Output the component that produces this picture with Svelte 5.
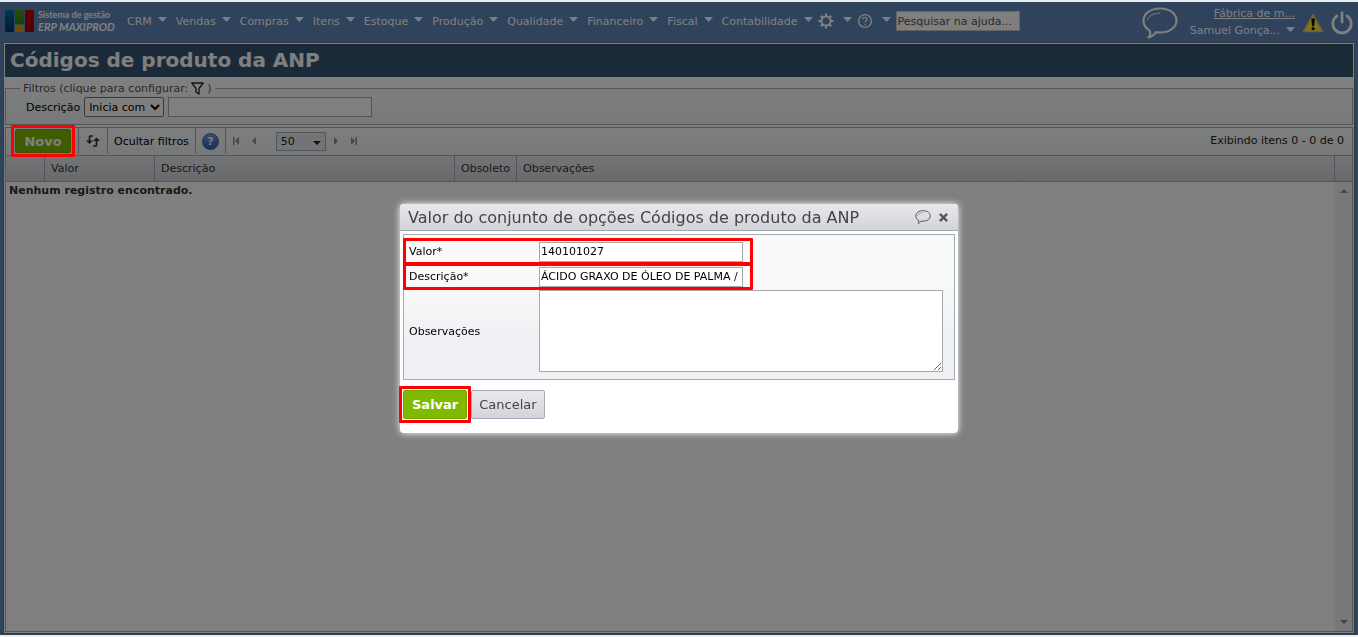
<script>
  const menus = ["CRM", "Vendas", "Compras", "Itens", "Estoque", "Produção", "Qualidade", "Financeiro", "Fiscal", "Contabilidade"];

  let filterMode = $state("Inicia com");
  let filterText = $state("");
  let pageSize = $state("50");
  let showFilters = $state(true);
  let dialogOpen = $state(true);
  let item = $state({
    valor: "140101027",
    descricao: "ÁCIDO GRAXO DE ÓLEO DE PALMA /",
    observacoes: "",
  });

  function closeDialog() {
    dialogOpen = false;
  }
</script>

{#snippet caret()}
  <svg class="caret" width="9" height="5" viewBox="0 0 9 5" aria-hidden="true"><path d="M0 0h9L4.5 5z" fill="currentColor" /></svg>
{/snippet}

{#snippet bubble(w, h)}
  <svg width={w} height={h} viewBox="0 0 36 32" fill="none" stroke="currentColor" stroke-linecap="round" stroke-linejoin="round" aria-hidden="true">
    <path d="M7.5 23.5C3.5 21 1.5 17.5 1.5 13.5C1.5 6.500 8.500 1.500 18 1.500S34.500 6.500 34.500 13.500S27.500 25.500 18 25.500C16.500 25.500 15.500 25.500 14 25.200C12 28 9.500 30 6.500 30.300C8.500 28 8.800 26 7.500 23.500z" stroke-width="2.2" />
    <path d="M5.5 13C6 9 11 6.200 18 6" stroke-width="1" />
  </svg>
{/snippet}

<div class="app">
  <header class="topbar">
    <a class="logo" href="#inicio">
      <svg width="30" height="23" viewBox="0 0 30 23" aria-hidden="true">
        <defs>
          <linearGradient id="lg-blue" x2="0" y2="1"><stop stop-color="#006cb4" /><stop offset="1" stop-color="#003a66" /></linearGradient>
          <linearGradient id="lg-green" x2="0" y2="1"><stop stop-color="#3fa012" /><stop offset="1" stop-color="#3a8404" /></linearGradient>
          <linearGradient id="lg-red" x2="0" y2="1"><stop stop-color="#d00000" /><stop offset="1" stop-color="#980000" /></linearGradient>
        </defs>
        <rect x="0" y="0" width="9" height="22" rx="1" fill="url(#lg-blue)" />
        <rect x="10" y="0" width="9" height="14" rx="1" fill="url(#lg-green)" />
        <rect x="10" y="15" width="9" height="7" rx="1" fill="#d29a10" />
        <rect x="20" y="0" width="9" height="22" rx="1" fill="url(#lg-red)" />
      </svg>
      <span class="logo-text"><span>Sistema de gestão</span><em>ERP MAXIPROD</em></span>
    </a>

    <nav class="menu">
      {#each menus as name}
        <button class="menu-item">{name}{@render caret()}</button>
      {/each}
      <button class="menu-item icon" aria-label="Configurações">
        <svg width="16" height="16" viewBox="0 0 16 16" fill="none" stroke="currentColor" aria-hidden="true">
          <circle cx="8" cy="8" r="4.6" stroke-width="2" />
          <path d="M8 .5v2.500M8 13v2.500M.5 8H3M13 8h2.500M2.700 2.700l1.800 1.800M11.500 11.500l1.800 1.800M2.700 13.300l1.800-1.800M11.500 4.500l1.800-1.800" stroke-width="2.2" />
        </svg>
        {@render caret()}
      </button>
      <button class="menu-item icon" aria-label="Ajuda">
        <svg width="16" height="16" viewBox="0 0 16 16" fill="none" stroke="currentColor" aria-hidden="true">
          <circle cx="8" cy="8" r="6.4" stroke-width="1.4" />
          <path d="M6 6.300C6 3.700 10.200 3.900 10.100 6.200C10 7.600 8.100 7.700 8.100 9.500M8.100 10.800v1.400" stroke-width="1.3" />
        </svg>
        {@render caret()}
      </button>
    </nav>
    <input class="help-search" type="text" placeholder="Pesquisar na ajuda..." aria-label="Pesquisar na ajuda" />

    <div class="user">
      <button class="plain" aria-label="Chat">{@render bubble(36, 32)}</button>
      <div class="account">
        <a href="#empresa">Fábrica de m...</a>
        <button class="plain name">Samuel Gonça...{@render caret()}</button>
      </div>
      <button class="plain" aria-label="Avisos">
        <svg width="22" height="20" viewBox="0 0 22 20" aria-hidden="true">
          <path d="M11 1.500L20.500 18.500H1.500z" fill="#ffe92e" stroke="#dcb888" stroke-width="1.5" stroke-linejoin="round" />
          <path d="M9.300 5.500h3.600l-.8 7.500h-2z" fill="#000" />
          <circle cx="11.1" cy="15.600" r="1.6" fill="#000" />
        </svg>
      </button>
      <button class="plain" aria-label="Sair">
        <svg width="22" height="24" viewBox="0 0 22 24" fill="none" stroke="currentColor" stroke-width="2.8" stroke-linecap="round" aria-hidden="true">
          <path d="M6 5A9.200 9.200 0 1 0 16 5M11 2v9" />
        </svg>
      </button>
    </div>
  </header>

  <main class="page">
    <h1>Códigos de produto da ANP</h1>

    {#if showFilters}
      <fieldset class="filters">
        <legend>
          Filtros (clique para configurar:
          <svg width="13" height="13" viewBox="0 0 13 13" fill="none" stroke="#222" stroke-width="1.3" stroke-linejoin="round" aria-hidden="true">
            <path d="M.8 1h11.400L8 6.500V12L5 10V6.500z" />
          </svg>
          )
        </legend>
        <div class="filter-row">
          <label for="filtro">Descrição</label>
          <select bind:value={filterMode} aria-label="Tipo de filtro">
            <option>Inicia com</option>
            <option>Contém</option>
            <option>Igual a</option>
          </select>
          <input id="filtro" type="text" bind:value={filterText} />
        </div>
      </fieldset>
    {/if}

    <section class="grid">
      <div class="toolbar">
        <div class="cell first">
          <div class="marked">
            <button class="primary new" onclick={() => (dialogOpen = true)}>Novo</button>
          </div>
        </div>
        <div class="cell wide">
          <button class="plain dark" aria-label="Atualizar">
            <svg width="14" height="12" viewBox="0 0 14 12" aria-hidden="true">
              <path d="M7 1H4.500Q3.500 1 3.500 2V7M7 11h2.500Q10.500 11 10.500 10V5" fill="none" stroke="#333" stroke-width="1.7" />
              <path d="M0 5.500h7L3.500 9zM7 6h7L10.500 2.500z" fill="#333" />
            </svg>
          </button>
        </div>
        <div class="cell">
          <button class="plain dark" onclick={() => (showFilters = !showFilters)}>Ocultar filtros</button>
        </div>
        <div class="cell">
          <button class="help" aria-label="Ajuda da tela">?</button>
        </div>
        <div class="pager">
          <button class="plain" aria-label="Primeira página"><svg width="8" height="8" viewBox="0 0 8 8"><path d="M1 0h1.500v8H1zM7 0v8L3 4z" fill="currentColor" /></svg></button>
          <button class="plain" aria-label="Página anterior"><svg width="8" height="8" viewBox="0 0 8 8"><path d="M6 0v8L2 4z" fill="currentColor" /></svg></button>
          <div class="size">
            <select bind:value={pageSize} aria-label="Itens por página">
              <option>20</option>
              <option>50</option>
              <option>100</option>
            </select>
            <svg width="8" height="4" viewBox="0 0 8 4" aria-hidden="true"><path d="M0 0h8L4 4z" fill="#222" /></svg>
          </div>
          <button class="plain" aria-label="Próxima página"><svg width="8" height="8" viewBox="0 0 8 8"><path d="M2 0v8l4-4z" fill="currentColor" /></svg></button>
          <button class="plain" aria-label="Última página"><svg width="8" height="8" viewBox="0 0 8 8"><path d="M5.500 0h1.500v8H5.500zM1 0v8l4-4z" fill="currentColor" /></svg></button>
        </div>
        <span class="count">Exibindo itens 0 - 0 de 0</span>
      </div>

      <div class="records">
        <table>
          <colgroup>
            <col class="c-sel" /><col class="c-valor" /><col class="c-desc" /><col class="c-obs" /><col /><col class="c-bar" />
          </colgroup>
          <thead>
            <tr><th></th><th>Valor</th><th>Descrição</th><th>Obsoleto</th><th>Observações</th><th></th></tr>
          </thead>
          <tbody>
            <tr><td colspan="5">Nenhum registro encontrado.</td></tr>
          </tbody>
        </table>
        <div class="scrollbar">
          <svg width="8" height="4" viewBox="0 0 8 4"><path d="M0 4h8L4 0z" fill="currentColor" /></svg>
          <svg width="8" height="4" viewBox="0 0 8 4"><path d="M0 0h8L4 4z" fill="currentColor" /></svg>
        </div>
      </div>
    </section>
  </main>
</div>

{#if dialogOpen}
  <div class="overlay">
    <div class="dialog" role="dialog" aria-modal="true" aria-labelledby="dialog-title">
      <div class="dialog-head">
        <h2 id="dialog-title">Valor do conjunto de opções Códigos de produto da ANP</h2>
        <button class="plain" aria-label="Comentar">{@render bubble(16, 14)}</button>
        <button class="plain" aria-label="Fechar" onclick={closeDialog}>
          <svg width="9" height="9" viewBox="0 0 10 10" stroke="currentColor" stroke-width="2.6" aria-hidden="true"><path d="M1 1l8 8M9 1L1 9" /></svg>
        </button>
      </div>
      <form id="item-form" class="fields" onsubmit={(e) => { e.preventDefault(); closeDialog(); }}>
        <div class="field boxed">
          <label for="valor">Valor*</label>
          <input id="valor" type="text" bind:value={item.valor} />
        </div>
        <div class="field boxed">
          <label for="descricao">Descrição*</label>
          <input id="descricao" type="text" bind:value={item.descricao} />
        </div>
        <div class="field notes">
          <label for="observacoes">Observações</label>
          <textarea id="observacoes" bind:value={item.observacoes}></textarea>
        </div>
      </form>
      <div class="actions">
        <div class="marked save">
          <button class="primary" type="submit" form="item-form">Salvar</button>
        </div>
        <button class="secondary" onclick={closeDialog}>Cancelar</button>
      </div>
    </div>
  </div>
{/if}

<style>
  :global(body) {
    background: #e8eef4;
    font-family: Verdana, "DejaVu Sans", sans-serif;
    font-size: 11px;
    color: #000;
  }
  * { box-sizing: border-box; }
  button, input, select, textarea { font: inherit; }
  button { cursor: pointer; }
  svg { display: block; flex: none; }

  .app {
    display: flex;
    flex-direction: column;
    min-height: 100vh;
    padding: 0 3px 1px;
    border-top: 2px solid #e8eef4;
    border-bottom: 2px solid #e8eef4;
    background: #5e86b8;
  }

  .topbar {
    display: flex;
    align-items: center;
    height: 40px;
    padding: 0 2px 2px;
    color: #fff;
  }
  .logo {
    display: flex;
    gap: 3px;
    width: 122px;
    color: #fff;
    text-decoration: none;
  }
  .logo-text {
    display: flex;
    flex-direction: column;
    font: bold 9px/10px Lato, sans-serif;
    white-space: nowrap;
  }
  .logo-text em { font-size: 11px; line-height: 13px; }
  .menu { display: flex; align-items: center; gap: 9px; }
  .menu-item {
    display: flex;
    align-items: center;
    gap: 6px;
    padding: 0;
    border: 0;
    background: none;
    color: inherit;
    white-space: nowrap;
  }
  .caret { margin-bottom: 4px; }
  .menu-item.icon { gap: 9px; margin-left: -4px; }
  .menu-item.icon:first-of-type { margin-left: 0; }
  .help-search {
    width: 124px;
    height: 20px;
    margin-left: 5px;
    padding: 0 1px;
    border: 1px solid #c8c8c8;
    background: #fff;
  }
  .help-search::placeholder { color: #555; opacity: 1; }
  .user {
    display: flex;
    align-items: center;
    gap: 7px;
    margin-left: auto;
    padding-top: 3px;
  }
  .account {
    display: flex;
    flex-direction: column;
    align-items: flex-end;
    gap: 3px;
    margin-left: 5px;
    line-height: 14px;
  }
  .account a { color: inherit; }
  .account .name { gap: 6px; }
  .plain {
    display: flex;
    align-items: center;
    padding: 0;
    border: 0;
    background: none;
    color: inherit;
    white-space: nowrap;
  }
  .plain.dark { color: #000; }

  .page {
    display: flex;
    flex-direction: column;
    flex: 1;
    padding: 1px;
    border: 1px solid #6c7480;
    background: #fff;
  }
  h1 {
    margin: 0;
    padding: 0 5px;
    background: #365472;
    color: #fff;
    font-size: 20px;
    line-height: 33px;
  }

  .filters {
    height: 43px;
    margin: 5px 0 2px;
    padding: 0 20px;
    border: 1px solid #a5abb5;
    background: linear-gradient(#fafcfb, #eff1f4);
  }
  .filters legend {
    display: flex;
    align-items: center;
    gap: 3px;
    height: 12px;
    margin-left: -6px;
    padding: 0 3px;
    color: #555;
  }
  .filter-row { display: flex; align-items: center; gap: 4px; margin-top: 3px; }
  .filter-row select {
    width: 80px;
    height: 20px;
    padding: 0;
    border: 1px solid #767676;
    border-radius: 2px;
    background: #fff;
  }
  .filter-row input {
    width: 204px;
    height: 20px;
    border: 1px solid #a8a8a8;
    background: #fff;
  }

  .grid {
    display: flex;
    flex-direction: column;
    flex: 1;
    border: 1px solid #a5abb5;
  }
  .toolbar {
    display: flex;
    align-items: flex-start;
    height: 27px;
    background: linear-gradient(#fafcfb, #eff1f4);
  }
  .cell {
    display: flex;
    align-items: center;
    height: 26px;
    padding: 0 6px;
    border-right: 1px solid #a5abb5;
  }
  .cell.first { padding: 0 7px 0 9px; }
  .cell.wide { padding: 0 7px; }
  .primary {
    height: 29px;
    padding: 0 8px;
    border: 1px solid #76a800;
    border-radius: 2px;
    background: #7fba00;
    color: #fff;
    font-size: 13px;
    font-weight: bold;
  }
  .primary.new { width: 56px; height: 24px; padding: 0; }
  .marked { position: relative; display: flex; }
  .marked::after {
    content: "";
    position: absolute;
    z-index: 20;
    inset: -4px;
    border: 3px solid #f00;
    border-radius: 1px;
    pointer-events: none;
  }
  .help {
    width: 17px;
    height: 17px;
    padding: 0;
    border: 1px solid #355fa8;
    border-radius: 50%;
    background: linear-gradient(#6f9be0, #2f62b8);
    color: #fff;
    font-size: 11px;
    font-weight: bold;
    line-height: 13px;
  }
  .pager {
    display: flex;
    align-items: center;
    gap: 10px;
    height: 26px;
    padding: 0 6px;
    color: #8a909a;
  }
  .size { position: relative; margin: 0 -4px 0 8px; }
  .size select {
    display: block;
    width: 50px;
    height: 19px;
    padding: 0 4px;
    appearance: none;
    border: 1px solid #a5abb5;
    border-radius: 0;
    background: #e6e8ec;
    color: #222;
  }
  .size svg { position: absolute; right: 5px; top: 9px; pointer-events: none; }
  .count { margin-left: auto; padding-right: 8px; line-height: 25px; color: #222; }

  .records { display: flex; flex: 1; position: relative; }
  table {
    width: 100%;
    height: 0;
    border-collapse: separate;
    border-spacing: 0;
    table-layout: fixed;
  }
  .c-sel { width: 39px; }
  .c-valor { width: 110px; }
  .c-desc { width: 300px; }
  .c-obs { width: 62px; }
  .c-bar { width: 17px; }
  th {
    height: 27px;
    padding: 0 6px;
    border: solid #a5abb5;
    border-width: 1px 1px 1px 0;
    background: linear-gradient(#e8e9eb, #d2d4da);
    color: #333;
    font-weight: normal;
    text-align: left;
    white-space: nowrap;
  }
  th:last-child { border-right: 0; }
  td { padding: 2px 3px; color: #333; font-weight: bold; }
  .scrollbar {
    position: absolute;
    inset: 27px 0 0 auto;
    display: flex;
    flex-direction: column;
    justify-content: space-between;
    align-items: center;
    width: 17px;
    padding: 7px 0;
    background: #f1f1f1;
    color: #8a8a8a;
  }

  .overlay {
    position: fixed;
    inset: 2px 0;
    z-index: 10;
    display: flex;
    justify-content: center;
    align-items: flex-start;
    background: rgba(0, 0, 0, 0.5);
  }
  .dialog {
    width: 558px;
    margin-top: 202px;
    border-radius: 4px;
    background: #fff;
    box-shadow: 0 0 7px #fff;
  }
  .dialog-head {
    display: flex;
    align-items: center;
    gap: 8px;
    height: 27px;
    padding: 0 10px 0 8px;
    border-bottom: 1px solid #a5abb5;
    border-radius: 4px 4px 0 0;
    background: linear-gradient(#e8e9eb, #d2d4da);
    color: #555;
  }
  h2 {
    flex: 1;
    margin: 0;
    color: #444;
    font-size: 16px;
    font-weight: normal;
    line-height: 27px;
    white-space: nowrap;
  }
  .fields {
    margin: 3px;
    padding: 3px 0 7px;
    border: 1px solid #a5abb5;
    background: linear-gradient(#f8faf9 30%, #f0f1f4 70%);
  }
  .field { position: relative; display: flex; align-items: center; padding-left: 5px; }
  .field label { width: 130px; }
  .field input {
    width: 204px;
    height: 20px;
    padding: 0 1px;
    border: 1px solid #a8a8a8;
    background: #fff;
  }
  .field textarea {
    width: 404px;
    height: 82px;
    border: 1px solid #a8a8a8;
    background: #fff;
    resize: both;
  }
  .notes { padding-top: 2px; }
  .boxed { height: 25px; padding-top: 2px; }
  .boxed::after {
    content: "";
    position: absolute;
    z-index: 1;
    inset: 0 201px -2px -1px;
    border: 3px solid #f00;
    border-radius: 1px;
    pointer-events: none;
  }
  .actions { display: flex; gap: 4px; padding: 7px 3px 14px; }
  .secondary {
    height: 29px;
    padding: 0 7px;
    border: 1px solid #a5abb5;
    border-radius: 2px;
    background: linear-gradient(#e8e9eb, #d2d4da);
    color: #444;
    font-size: 13px;
  }
</style>
